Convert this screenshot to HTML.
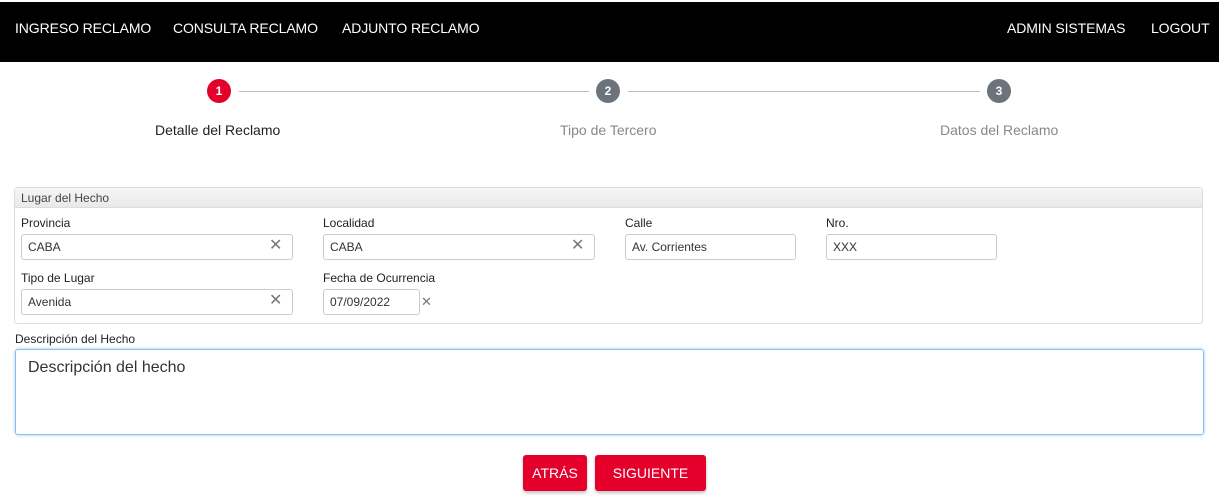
<!DOCTYPE html>
<html><head><meta charset="utf-8"><style>
body{margin:0;width:1219px;height:502px;background:#fff;font-family:"Liberation Sans",Arial,sans-serif;position:relative;overflow:hidden}
.a{position:absolute}
.nav{left:0;top:0;width:1219px;height:62px;background:#000;border-top:2px solid #fff;box-sizing:border-box}
.nav span{position:absolute;top:18px;color:#fff;font-size:14px;letter-spacing:-0.1px}
.c{width:24px;height:24px;border-radius:50%;color:#fff;font-size:12px;font-weight:bold;text-align:center;line-height:24px}
.ln{height:1px;background:#bbb;top:91px}
.st{font-size:14px;top:122px}
.lbl{font-size:12px;color:#222}
.in{border:1px solid #ccc;border-radius:3px;height:24px;box-sizing:border-box;font-size:12px;color:#333;padding:5px 6px}
.x{font-size:16px;color:#777}
.btn{background:#e4002b;color:#fff;font-size:14px;border-radius:3px;text-align:center;line-height:36px;height:36px;top:455px;box-shadow:0 2px 3px rgba(0,0,0,.25)}
</style></head><body>
<div class="a nav"><span style="left:15px">INGRESO RECLAMO</span><span style="left:173px">CONSULTA RECLAMO</span><span style="left:342px">ADJUNTO RECLAMO</span><span style="left:1007px">ADMIN SISTEMAS</span><span style="left:1151px">LOGOUT</span></div>
<div class="a c" style="left:207px;top:79px;background:#e4002b">1</div>
<div class="a ln" style="left:239px;width:350px"></div>
<div class="a c" style="left:596px;top:79px;background:#6c737a">2</div>
<div class="a ln" style="left:628px;width:352px"></div>
<div class="a c" style="left:987px;top:79px;background:#6c737a">3</div>
<div class="a st" style="left:155px;color:#222">Detalle del Reclamo</div>
<div class="a st" style="left:560px;color:#888">Tipo de Tercero</div>
<div class="a st" style="left:940px;color:#888">Datos del Reclamo</div>
<div class="a" style="left:14px;top:187px;width:1189px;height:137px;border:1px solid #ddd;border-radius:3px;box-sizing:border-box"></div>
<div class="a" style="left:15px;top:188px;width:1187px;height:20px;background:linear-gradient(#f6f6f6,#e9e9e9);border-bottom:1px solid #ddd;font-size:12px;color:#444;line-height:20px;padding-left:6px;box-sizing:border-box">Lugar del Hecho</div>
<div class="a lbl" style="left:21px;top:216px">Provincia</div>
<div class="a lbl" style="left:323px;top:216px">Localidad</div>
<div class="a lbl" style="left:625px;top:216px">Calle</div>
<div class="a lbl" style="left:826px;top:216px">Nro.</div>
<div class="a in" style="left:21px;top:234px;width:272px;height:26px">CABA</div><div class="a x" style="left:269px;top:235px">✕</div>
<div class="a in" style="left:323px;top:234px;width:272px;height:26px">CABA</div><div class="a x" style="left:571px;top:235px">✕</div>
<div class="a in" style="left:625px;top:234px;width:171px;height:26px">Av. Corrientes</div>
<div class="a in" style="left:826px;top:234px;width:171px;height:26px">XXX</div>
<div class="a lbl" style="left:21px;top:271px">Tipo de Lugar</div>
<div class="a lbl" style="left:323px;top:271px">Fecha de Ocurrencia</div>
<div class="a in" style="left:21px;top:289px;width:272px;height:26px">Avenida</div><div class="a x" style="left:269px;top:290px">✕</div>
<div class="a in" style="left:323px;top:289px;width:97px;height:26px">07/09/2022</div><div class="a x" style="left:421px;top:294px;font-size:13px">✕</div>
<div class="a lbl" style="left:15px;top:332px">Descripción del Hecho</div>
<div class="a" style="left:15px;top:349px;width:1189px;height:86px;border:1px solid #8cbdf0;box-shadow:0 0 3px #9cc8f5;border-radius:3px;box-sizing:border-box;font-size:16px;color:#333;padding:9px 12px">Descripción del hecho</div>
<div class="a btn" style="left:523px;width:64px">ATRÁS</div>
<div class="a btn" style="left:595px;width:111px">SIGUIENTE</div>
</body></html>
